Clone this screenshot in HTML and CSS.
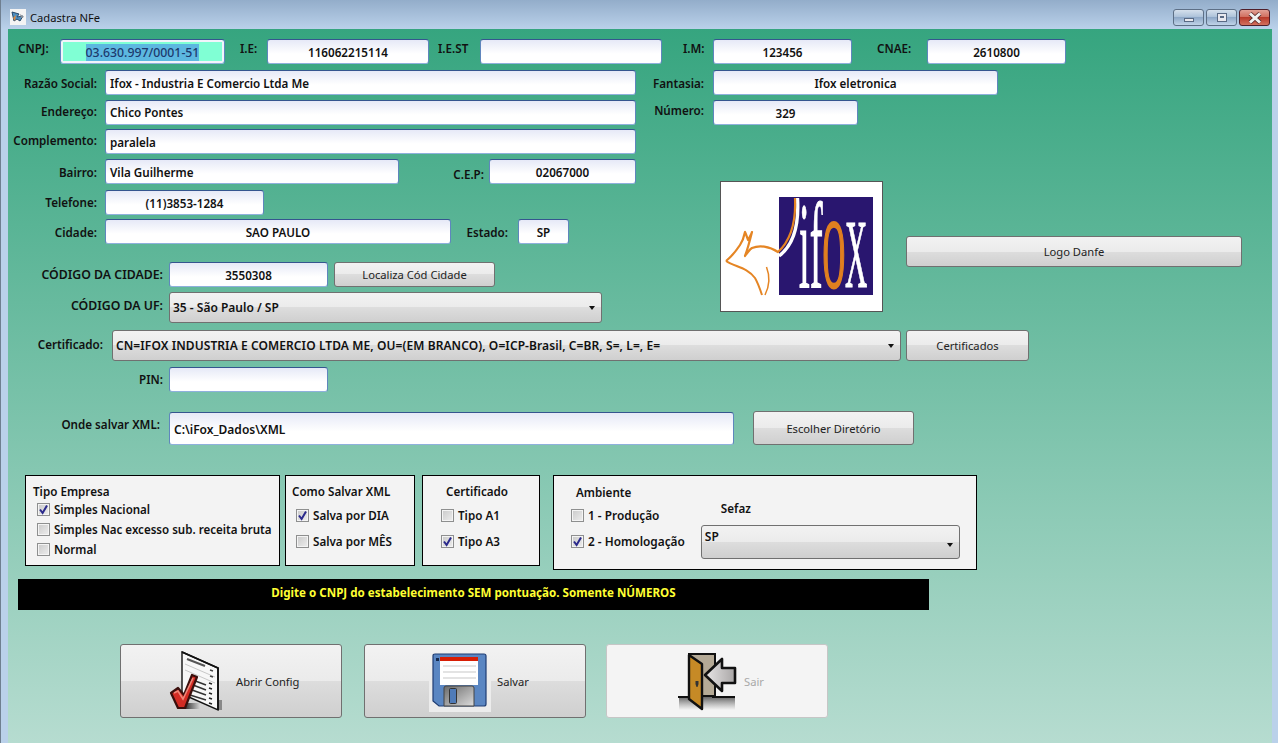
FILE: index.html
```html
<!DOCTYPE html>
<html lang="pt-BR">
<head>
    <meta charset="UTF-8">
    <meta name="viewport" content="width=device-width, initial-scale=1.0">
    <title>Cadastra NFe</title>
    <link rel="stylesheet" href="styles.css">
</head>
<body>
    <div class="window">
        <div class="titlebar">
            <svg class="app-icon" width="16" height="16" viewBox="0 0 16 16">
                <rect width="16" height="16" fill="#f4f4f4"/>
                <path d="M2 3 L9 5 L7 8 L13 7 L10 12 L7 10 L4 12 Z" fill="#4f8fc0" stroke="#27496b" stroke-width="1"/>
                <path d="M3 9 L6 6 L5 12 Z" fill="#e08a3c"/>
                <path d="M10 5 L14 8 L11 9 Z" fill="#8a8f96"/>
            </svg>
            <span class="title">Cadastra NFe</span>
            <div class="win-buttons">
                <div class="win-btn"><span class="glyph-min"></span></div>
                <div class="win-btn"><span class="glyph-max"></span></div>
                <div class="win-btn win-close">
                    <svg width="16" height="12" viewBox="0 0 16 12"><path d="M3 1.5 L13 10.5 M13 1.5 L3 10.5" stroke="#5a2a2a" stroke-width="4.4"/><path d="M3 1.5 L13 10.5 M13 1.5 L3 10.5" stroke="#f1f1f1" stroke-width="3"/></svg>
                </div>
            </div>
        </div>

        <div class="content">
            <div class="row row-cnpj">
                <span class="lbl lbl-cnpj">CNPJ:</span>
                <div class="field f-cnpj"><span class="selected">03.630.997/0001-51</span></div>
                <span class="lbl lbl-ie">I.E:</span>
                <div class="field center f-ie">116062215114</div>
                <span class="lbl lbl-iest">I.E.ST</span>
                <div class="field center f-iest"></div>
                <span class="lbl lbl-im">I.M:</span>
                <div class="field center f-im">123456</div>
                <span class="lbl lbl-cnae">CNAE:</span>
                <div class="field center f-cnae">2610800</div>
            </div>

            <div class="row row-razao">
                <span class="lbl lbl-left">Razão Social:</span>
                <div class="field f-wide">Ifox - Industria E Comercio Ltda Me</div>
                <span class="lbl lbl-right">Fantasia:</span>
                <div class="field center f-fantasia">Ifox eletronica</div>
            </div>
            <div class="row row-endereco">
                <span class="lbl lbl-left">Endereço:</span>
                <div class="field f-wide">Chico Pontes</div>
                <span class="lbl lbl-right">Número:</span>
                <div class="field center f-numero">329</div>
            </div>
            <div class="row row-compl">
                <span class="lbl lbl-left">Complemento:</span>
                <div class="field f-wide">paralela</div>
            </div>

            <div class="middle">
                <div class="middle-left">
                    <div class="row row-bairro">
                        <span class="lbl lbl-left">Bairro:</span>
                        <div class="field f-bairro">Vila Guilherme</div>
                        <span class="lbl lbl-cep">C.E.P:</span>
                        <div class="field center f-cep">02067000</div>
                    </div>
                    <div class="row row-fone">
                        <span class="lbl lbl-left">Telefone:</span>
                        <div class="field center f-fone">(11)3853-1284</div>
                    </div>
                    <div class="row row-cidade">
                        <span class="lbl lbl-left">Cidade:</span>
                        <div class="field center f-cidade">SAO PAULO</div>
                        <span class="lbl lbl-estado">Estado:</span>
                        <div class="field center f-estado">SP</div>
                    </div>
                    <div class="row row-codcid">
                        <span class="lbl lbl-long lbl-caps">CÓDIGO DA CIDADE:</span>
                        <div class="field center f-short">3550308</div>
                        <div class="btn btn-localiza">Localiza Cód Cidade</div>
                    </div>
                    <div class="row row-coduf">
                        <span class="lbl lbl-long lbl-caps">CÓDIGO DA UF:</span>
                        <div class="combo combo-uf">35 - São Paulo / SP<span class="arrow"></span></div>
                    </div>
                </div>
                <div class="middle-right">
                    <div class="logo">
                        <svg width="161" height="129" viewBox="0 0 161 129">
                            <rect x="58" y="15" width="94" height="98" fill="#29166f"/>
                            <g transform="translate(78 105) scale(0.318 1)">
                                <text class="logo-text"><tspan class="logo-tall">if</tspan><tspan class="logo-o">O</tspan><tspan>X</tspan></text>
                            </g>
                            <path d="M76.500 16 C78 40 74 62 58 74" fill="none" stroke="#ffffff" stroke-width="3.4"/>
                            <path d="M74 16 C75 38 70 58 57 70 C48 64 38 63 31 66 C28 68 26 71 24 74 C27 66 29 58 31 50 C30 53 28 56 27 58 C26 55 25 52 24 50 C23 55 21 60 19 63 C15 69 10 75 5 79" fill="none" stroke="#e58524" stroke-width="2.2" stroke-linejoin="round"/>
                            <path d="M5 79 C14 85 26 85 34 96 C37 101 39 107 41 113" fill="none" stroke="#e58524" stroke-width="2"/>
                            <path d="M45.500 85 C49 94 49 103 44 113" fill="none" stroke="#e58524" stroke-width="1.5"/>
                        </svg>
                    </div>
                    <div class="btn btn-danfe">Logo Danfe</div>
                </div>
            </div>

            <div class="row row-cert">
                <span class="lbl lbl-cert">Certificado:</span>
                <div class="combo combo-cert">CN=IFOX INDUSTRIA E COMERCIO LTDA ME, OU=(EM BRANCO), O=ICP-Brasil, C=BR, S=, L=, E=<span class="arrow"></span></div>
                <div class="btn btn-cert">Certificados</div>
            </div>
            <div class="row row-pin">
                <span class="lbl lbl-long">PIN:</span>
                <div class="field f-short"></div>
            </div>
            <div class="row row-xml">
                <span class="lbl lbl-long lbl-xml">Onde salvar XML:</span>
                <div class="field f-xml">C:\iFox_Dados\XML</div>
                <div class="btn btn-dir">Escolher Diretório</div>
            </div>

            <div class="panels">
                <div class="panel panel-tipo">
                    <div class="panel-title">Tipo Empresa</div>
                    <div class="opt"><span class="box on"><svg width="11" height="11" viewBox="0 0 11 11"><path d="M2 5.5 L4.6 9 L9 1.5" fill="none" stroke="#2b2a8c" stroke-width="2"/></svg></span>Simples Nacional</div>
                    <div class="opt"><span class="box"></span>Simples Nac excesso sub. receita bruta</div>
                    <div class="opt"><span class="box"></span>Normal</div>
                </div>
                <div class="panel panel-salvar">
                    <div class="panel-title">Como Salvar XML</div>
                    <div class="opt"><span class="box on"><svg width="11" height="11" viewBox="0 0 11 11"><path d="M2 5.5 L4.6 9 L9 1.5" fill="none" stroke="#2b2a8c" stroke-width="2"/></svg></span>Salva por DIA</div>
                    <div class="opt"><span class="box"></span>Salva por MÊS</div>
                </div>
                <div class="panel panel-cert">
                    <div class="panel-title">Certificado</div>
                    <div class="opt"><span class="box"></span>Tipo A1</div>
                    <div class="opt"><span class="box on"><svg width="11" height="11" viewBox="0 0 11 11"><path d="M2 5.5 L4.6 9 L9 1.5" fill="none" stroke="#2b2a8c" stroke-width="2"/></svg></span>Tipo A3</div>
                </div>
                <div class="panel panel-amb">
                    <div class="amb-col">
                        <div class="panel-title">Ambiente</div>
                        <div class="opt"><span class="box"></span>1 - Produção</div>
                        <div class="opt"><span class="box on"><svg width="11" height="11" viewBox="0 0 11 11"><path d="M2 5.5 L4.6 9 L9 1.5" fill="none" stroke="#2b2a8c" stroke-width="2"/></svg></span>2 - Homologação</div>
                    </div>
                    <div class="sefaz-col">
                        <div class="panel-title">Sefaz</div>
                        <div class="combo combo-sefaz">SP<span class="arrow"></span></div>
                    </div>
                </div>
            </div>

            <div class="hint">Digite o CNPJ do estabelecimento SEM pontuação. Somente NÚMEROS</div>

            <div class="actions">
                <div class="btn big big-config">
                    <svg class="big-icon" width="62" height="62" viewBox="0 0 62 62">
                        <defs>
                            <linearGradient id="checkShadow" x1="0" x2="1" y1="0" y2="0">
                                <stop offset="0" stop-color="#222"/>
                                <stop offset="1" stop-color="#222" stop-opacity="0"/>
                            </linearGradient>
                        </defs>
                        <rect x="16" y="53" width="16" height="6" fill="url(#checkShadow)"/>
                        <rect x="51" y="50" width="3" height="10" fill="#888"/>
                        <path d="M14 2 L50 18 L50 60 L14 44 Z" fill="#f7f7f7" stroke="#111" stroke-width="1.4"/>
                        <path d="M14 2 L50 18 L50 60" fill="none" stroke="#111" stroke-width="1.8"/>
                        <path d="M19 9 L37 16" stroke="#555" stroke-width="2"/>
                        <path d="M17 14 L47 27 M17 20 L47 33" stroke="#c8c8c8" stroke-width="1"/>
                        <path d="M42 20 L45 21 M42 26 L45 27" stroke="#444" stroke-width="1.4"/>
                        <path d="M41 33 L44 34 M41 38 L44 39 M41 43 L44 44 M41 48 L44 49 M41 53 L44 54" stroke="#222" stroke-width="1.6"/>
                        <path d="M22 29 L38 35 M25 35 L38 40 M24 40 L38 45 M22 45 L38 50" stroke="#333" stroke-width="1.5"/>
                        <path d="M3 43 L10 38 L16 45 L24 25 L29 27 L17 58 L10 58 Z" fill="#d32c24" stroke="#3a0f0c" stroke-width="2.2" stroke-linejoin="round"/>
                        <path d="M6 43 L10 41 L15 49 L25 28" fill="none" stroke="#ee8678" stroke-width="1.6"/>
                    </svg>
                    <span>Abrir Config</span>
                </div>
                <div class="btn big big-salvar">
                    <svg class="big-icon" width="62" height="62" viewBox="0 0 62 62">
                        <defs>
                            <linearGradient id="shutter" x1="0" x2="1" y1="0" y2="1">
                                <stop offset="0" stop-color="#6a6a6a"/>
                                <stop offset="1" stop-color="#dcdcdc"/>
                            </linearGradient>
                        </defs>
                        <rect y="30" width="62" height="32" fill="#ececec"/>
                        <path d="M6 4 H55 Q57 4 57 6 V54 Q57 56 55 56 H10 L4 51 V6 Q4 4 6 4 Z" fill="#5a86c2" stroke="#1f3d73" stroke-width="1.2"/>
                        <rect x="11" y="7" width="38" height="28" fill="#fff"/>
                        <rect x="11" y="7" width="38" height="4" fill="#d81e05"/>
                        <path d="M14 16 H47 M14 22 H47 M14 28 H47" stroke="#c8c8c8" stroke-width="1.2"/>
                        <rect x="7" y="8" width="3" height="3" fill="#14284c"/>
                        <path d="M17 36 H43 Q45 36 45 38 V56 H15 V38 Q15 36 17 36 Z" fill="url(#shutter)" stroke="#444" stroke-width="1"/>
                        <rect x="20.500" y="38.500" width="7" height="15" rx="1" fill="#4f7bb8" stroke="#333" stroke-width="1"/>
                    </svg>
                    <span>Salvar</span>
                </div>
                <div class="btn big big-sair disabled">
                    <svg class="big-icon" width="62" height="62" viewBox="0 0 62 62">
                        <defs>
                            <linearGradient id="floorShadow" x1="0" x2="0" y1="0" y2="1">
                                <stop offset="0" stop-color="#666"/>
                                <stop offset="1" stop-color="#888" stop-opacity="0"/>
                            </linearGradient>
                            <linearGradient id="arrowFill" x1="0" x2="1" y1="0" y2="0">
                                <stop offset="0" stop-color="#e8e6e6"/>
                                <stop offset="1" stop-color="#a9a6a6"/>
                            </linearGradient>
                        </defs>
                        <rect x="3" y="47" width="56" height="13" fill="url(#floorShadow)"/>
                        <rect x="13" y="4" width="26" height="42" fill="#b5aa96" stroke="#111" stroke-width="2"/>
                        <path d="M2 47 H14 M36 47 H59" stroke="#111" stroke-width="2"/>
                        <path d="M13 5 L26 14 V59 L13 49 Z" fill="#c68a26" stroke="#111" stroke-width="2.4" stroke-linejoin="round"/>
                        <path d="M19.500 31 h3 v3 l-1 3 h-1 l-1 -3 Z" fill="#333"/>
                        <path d="M29 25 L46 9 V18 L59 18 V33 H46 V41 Z" fill="url(#arrowFill)" stroke="#111" stroke-width="2.6" stroke-linejoin="round"/>
                    </svg>
                    <span>Sair</span>
                </div>
            </div>
        </div>
    </div>
</body>
</html>
```

FILE: styles.css
```css
* {
    box-sizing: border-box;
}

html, body {
    margin: 0;
    height: 100%;
    overflow: hidden;
}

body {
    font-family: "Noto Sans", "Open Sans", sans-serif;
    font-size: 11.65px;
    font-weight: 600;
    color: #111;
    background-color: #b9d1ea;
}

.window {
    height: 743px;
    padding: 0 6px 0 7px;
    background: linear-gradient(to bottom, #93adca 0, #bad1ea 29px);
    border-left: 1px solid #6f7f90;
}

.titlebar {
    height: 29px;
    display: flex;
    align-items: center;
    margin-left: -7px;
    padding-left: 9px;
    padding-top: 5px;
}

.app-icon {
    margin-right: 4px;
}

.title {
    font-weight: 400;
    font-size: 11.2px;
}

.win-buttons {
    margin-left: auto;
    display: flex;
    gap: 2px;
    margin-right: 2px;
    margin-top: 1px;
}

.win-btn {
    width: 31px;
    height: 17px;
    border: 1px solid #5d6f86;
    border-radius: 3px;
    background: linear-gradient(to bottom, #d5e0ec 0, #a9bfd8 50%, #8fa9c8 50%, #c0d3e8 100%);
    display: flex;
    align-items: center;
    justify-content: center;
}

.win-close {
    border-color: #4f1f2a;
    background: linear-gradient(to bottom, #e2a095 0, #cf6a5a 50%, #b83a2a 50%, #d2705e 100%);
}

.glyph-min {
    width: 10px;
    height: 4px;
    margin-top: 4px;
    background: #e8e8ee;
    border: 1px solid #596a84;
}

.glyph-max {
    width: 10px;
    height: 9px;
    background: #e8e8ee;
    border: 1px solid #596a84;
    position: relative;
}

.glyph-max::after {
    content: "";
    position: absolute;
    left: 2px;
    top: 2px;
    width: 4px;
    height: 2px;
    background: #596a84;
}

.content {
    height: 714px;
    padding: 10px 0 0 0;
    background: linear-gradient(to bottom, #36a57f 0%, #b6dcd0 100%);
}

.row {
    display: flex;
    align-items: center;
}

.lbl {
    white-space: nowrap;
}

.field {
    height: 25px;
    border: 1px solid;
    border-color: #35558f #5f86bd #8fb0dc;
    border-radius: 3px;
    background: linear-gradient(to bottom, #e6e9f7 0, #ffffff 60%);
    padding: 2px 4px 0;
    display: flex;
    align-items: center;
    white-space: nowrap;
}

.field.center {
    justify-content: center;
}

/* linha 1 */
.row-cnpj {
    padding-left: 10px;
}

.row-cnpj .lbl {
    margin-top: -6px;
}

.lbl-cnpj {
    width: 42px;
}

.lbl-ie {
    width: 27px;
    margin-left: 15px;
}

.lbl-iest {
    width: 42px;
    margin-left: 9px;
}

.lbl-im {
    width: 30px;
    margin-left: 21px;
}

.lbl-cnae {
    width: 50px;
    margin-left: 25px;
}

.f-cnpj {
    width: 165px;
    justify-content: center;
    background: #80ffd4;
    box-shadow: inset 0 0 0 2px #f1f4fb;
    color: #1d3a6e;
    font-size: 12.3px;
    font-weight: 500;
}

.selected {
    background: #5cb8e0;
}

.f-ie {
    width: 162px;
}

.f-iest {
    width: 182px;
}

.f-im {
    width: 139px;
}

.f-cnae {
    width: 139px;
}

/* linhas de endereco */
.row-razao {
    margin-top: 6px;
}

.row-razao .lbl,
.row-bairro .lbl {
    padding-top: 2px;
}

.row-endereco {
    margin-top: 5px;
}

.row-endereco .lbl {
    margin-top: -2px;
}

.row-endereco .lbl-right {
    margin-top: -4px;
}

.row-endereco .f-wide {
    padding-top: 0;
}

.row-compl {
    margin-top: 4px;
}

.row-compl .lbl {
    margin-top: -2px;
}

.row-compl .field {
    padding-top: 1px;
}

.lbl-left {
    width: 89px;
    text-align: right;
    margin-right: 8px;
}

.lbl-right {
    width: 68px;
    text-align: right;
    margin-right: 9px;
}

.f-wide {
    width: 531px;
}

.f-fantasia {
    width: 285px;
}

.f-numero {
    width: 145px;
}

.middle {
    display: flex;
}

.middle-left {
    width: 712px;
}

.middle-right {
    flex: 1;
    padding-top: 27px;
    display: flex;
}

.logo {
    width: 163px;
    height: 131px;
    background: #fff;
    border: 1px solid #555;
}

.btn-danfe {
    width: 336px;
    height: 31px;
    margin: 55px 0 0 23px;
}

.row-bairro {
    margin-top: 5px;
}

.f-bairro {
    width: 294px;
}

.lbl-cep {
    width: 85px;
    text-align: right;
    margin-right: 5px;
    margin-top: 4px;
}

.f-cep {
    width: 147px;
}

.row-fone {
    margin-top: 6px;
}

.f-fone {
    width: 159px;
}

.row-cidade {
    margin-top: 4px;
}

.row-cidade .lbl {
    padding-top: 2px;
}

.f-cidade {
    width: 346px;
}

.lbl-estado {
    width: 57px;
    text-align: right;
    margin-right: 10px;
}

.f-estado {
    width: 51px;
}

.row-codcid {
    margin-top: 18px;
}

.lbl-long {
    width: 155px;
    text-align: right;
    margin-right: 6px;
    flex-shrink: 0;
}

.lbl-caps {
    font-size: 12.3px;
}

.f-short {
    width: 159px;
}

.btn {
    border: 1px solid #707070;
    border-radius: 3px;
    background: linear-gradient(to bottom, #f2f2f2 0, #ebebeb 50%, #dddddd 50%, #cfcfcf 100%);
    display: flex;
    align-items: center;
    justify-content: center;
    font-size: 11.2px;
    font-weight: 400;
    color: #222;
}

.btn-localiza {
    width: 161px;
    height: 25px;
    margin-left: 6px;
}

.row-coduf {
    margin-top: 5px;
}

.row-coduf .lbl {
    margin-top: -4px;
}

.combo {
    height: 31px;
    border: 1px solid #707070;
    border-radius: 3px;
    background: linear-gradient(to bottom, #f2f2f2 0, #ebebeb 50%, #dddddd 50%, #cfcfcf 100%);
    display: flex;
    align-items: center;
    padding: 0 6px 0 3px;
    font-size: 12px;
    white-space: nowrap;
}

.arrow {
    margin-left: auto;
    border-left: 3.5px solid transparent;
    border-right: 3.5px solid transparent;
    border-top: 4px solid #111;
}

.combo-uf {
    width: 433px;
}

.row-cert {
    margin-top: 7px;
}

.lbl-cert {
    width: 95px;
    text-align: right;
    margin-right: 9px;
    margin-top: -2px;
}

.combo-cert {
    width: 789px;
    letter-spacing: 0.09px;
}

.btn-cert {
    width: 123px;
    height: 31px;
    margin-left: 5px;
}

.row-pin {
    margin-top: 6px;
}

.row-xml {
    margin-top: 19px;
}

.lbl-xml {
    margin-top: -7px;
    width: 152px;
    margin-right: 9px;
}

.f-xml {
    width: 565px;
    height: 33px;
    font-size: 12px;
}

.btn-dir {
    width: 161px;
    height: 34px;
    margin-left: 19px;
}

/* paineis */
.panels {
    display: flex;
    align-items: flex-start;
    margin: 30px 0 0 17px;
}

.panel {
    height: 91px;
    border: 1px solid #000;
    background: #f3f3f3;
}

.panel-title {
    line-height: 16px;
}

.opt {
    display: flex;
    align-items: center;
    white-space: nowrap;
}

.box {
    width: 13px;
    height: 13px;
    border: 1px solid #8e8f8f;
    background: linear-gradient(135deg, #c9c9c9, #eeeeee);
    box-shadow: inset 0 0 0 1px #f4f4f4;
    margin-right: 4px;
    display: flex;
    align-items: center;
    justify-content: center;
    flex-shrink: 0;
}

.panel-tipo {
    width: 255px;
    padding: 8px 0 0 7px;
}

.panel-tipo .opt {
    height: 20px;
    margin-left: 4px;
    font-size: 11.55px;
}

.panel-tipo .panel-title {
    margin-bottom: -1px;
}

.panel-salvar {
    width: 130px;
    margin-left: 5px;
    padding: 8px 0 0 6px;
}

.panel-salvar .opt {
    height: 26px;
    margin-left: 4px;
}

.panel-salvar .panel-title {
    margin-bottom: 2px;
}

.panel-cert {
    width: 118px;
    margin-left: 7px;
    padding: 8px 0 0 6px;
}

.panel-cert .panel-title {
    margin: 0 0 2px 17px;
}

.panel-cert .opt {
    height: 26px;
    margin-left: 12px;
}

.panel-amb {
    width: 424px;
    height: 95px;
    margin-left: 13px;
    padding: 9px 0 0 17px;
    display: flex;
}

.amb-col .panel-title {
    margin: 0 0 1px 5px;
}

.amb-col .opt {
    height: 26px;
    font-size: 11.85px;
}

.sefaz-col {
    margin-left: 16px;
}

.sefaz-col .panel-title {
    margin: 16px 0 8px 20px;
}

.combo-sefaz {
    width: 259px;
    height: 34px;
    align-items: flex-start;
    padding-top: 2px;
}

.combo-sefaz .arrow {
    margin-top: 15px;
}

.hint {
    width: 911px;
    height: 31px;
    margin: 9px 0 0 10px;
    padding-bottom: 5px;
    background: #000;
    color: #ffff33;
    font-size: 11.6px;
    font-weight: 700;
    display: flex;
    align-items: center;
    justify-content: center;
}

/* botoes grandes */
.actions {
    display: flex;
    margin: 34px 0 0 112px;
}

.big {
    width: 222px;
    height: 74px;
    gap: 6px;
    justify-content: flex-start;
}

.big-config {
    padding-left: 47px;
}

.big-salvar {
    margin-left: 22px;
    padding-left: 64px;
}

.big-sair {
    margin-left: 20px;
    padding-left: 69px;
}

.big-icon {
    flex-shrink: 0;
}

.big.disabled {
    background: #f4f4f4;
    border-color: #c6c6c6;
    color: #a8a8a8;
}

.logo-text {
    font-family: "Liberation Serif", serif;
    font-size: 97px;
    font-weight: 400;
    fill: #ffffff;
    stroke: #ffffff;
    stroke-width: 1.2;
}

.logo-tall {
    font-size: 122px;
}

.logo-o {
    fill: #e07f20;
    stroke: #e07f20;
    stroke-width: 3;
}
```
